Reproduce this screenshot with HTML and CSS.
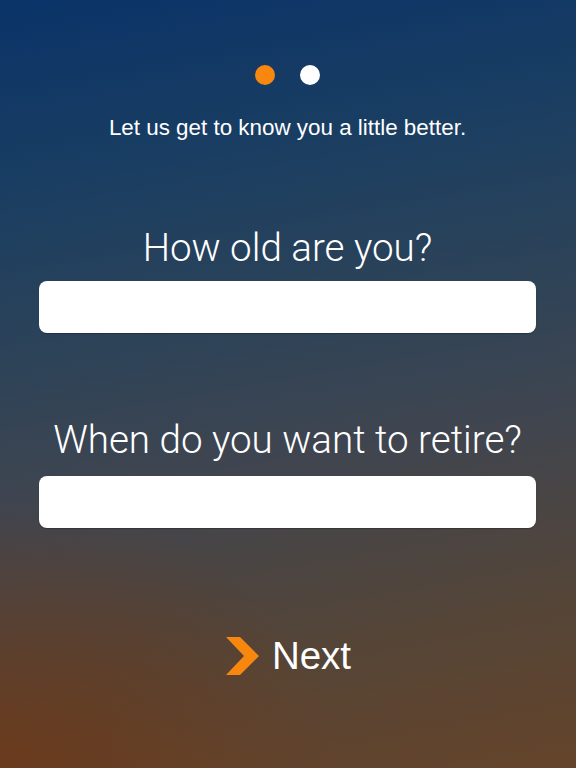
FILE: index.html
```html
<!DOCTYPE html>
<html>
<head>
<meta charset="utf-8">
<link rel="stylesheet" href="styles.css">
</head>
<body>
<div class="screen">
  <div class="dots">
    <span class="dot dot-active"></span>
    <span class="dot"></span>
  </div>
  <p class="intro">Let us get to know you a little better.</p>
  <h2 class="question q1">How old are you?</h2>
  <div class="field"></div>
  <h2 class="question q2">When do you want to retire?</h2>
  <div class="field"></div>
  <div class="next">
    <svg class="chevron" width="33" height="38" viewBox="0 0 33 38"><polygon points="0,0 14,0 33,19 14,38 0,38 18,19" fill="#f7870f"/></svg>
    <span class="next-label">Next</span>
  </div>
</div>
</body>
</html>
```
FILE: styles.css
```css
html, body {
  margin: 0;
  padding: 0;
}
body {
  width: 576px;
  height: 768px;
  overflow: hidden;
}
.screen {
  box-sizing: border-box;
  width: 576px;
  height: 768px;
  padding: 65px 40px 0 39px;
  display: flex;
  flex-direction: column;
  align-items: stretch;
  color: #fff;
  background:
    radial-gradient(ellipse 60% 35% at 0% 100%, rgba(120,50,10,0.55), rgba(120,50,10,0) 100%),
    linear-gradient(170deg, #0a3368 0%, #1a3e62 22%, #2d4358 42%, #3f4550 58%, #544538 80%, #65442a 100%);
}
.dots {
  display: flex;
  justify-content: center;
  gap: 25px;
  height: 20px;
}
.dot {
  width: 20px;
  height: 20px;
  border-radius: 50%;
  background: #fff;
}
.dot-active {
  background: #f7870f;
}
.intro {
  margin: 31px 0 0;
  text-align: center;
  font-family: "Liberation Sans", Arial, sans-serif;
  font-size: 22.4px;
  line-height: 24px;
}
.question {
  margin: 0;
  text-align: center;
  font-family: Roboto, "Liberation Sans", sans-serif;
  font-weight: 300;
  font-size: 38.6px;
  line-height: 44px;
}
.q1 {
  margin-top: 86px;
  margin-bottom: 11px;
}
.q2 {
  margin-top: 85px;
  margin-bottom: 14px;
}
.field {
  height: 52px;
  background: #fff;
  border-radius: 8px;
  box-shadow: 0 1px 1px rgba(0,0,0,0.25);
}
.next {
  margin-top: 108px;
  display: flex;
  justify-content: center;
  align-items: center;
  gap: 13px;
  padding-left: 2px;
}
.next-label {
  font-family: "Liberation Sans", Arial, sans-serif;
  font-size: 38.5px;
  line-height: 40px;
}
```
